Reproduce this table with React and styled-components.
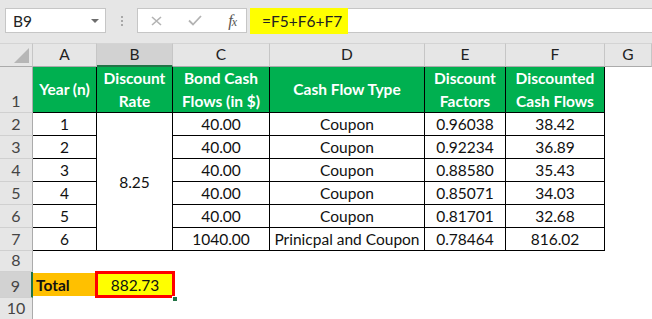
import React from "react";
import styled, { createGlobalStyle } from "styled-components";

const GlobalStyle = createGlobalStyle`
  html, body { margin: 0; padding: 0; background: #fff; }
  body { font-family: Lato, "Open Sans", sans-serif; }
  * { box-sizing: border-box; }
`;

const Page = styled.div`
  width: 652px;
  height: 319px;
  overflow: hidden;
  background: #fff;
  display: flex;
  flex-direction: column;
`;

const FormulaBar = styled.div`
  height: 43px;
  flex: none;
  background: #e6e6e6;
  display: flex;
  align-items: flex-start;
  padding: 8px 0 0 5px;
`;

const NameBox = styled.div`
  width: 101px;
  height: 25px;
  background: #fff;
  border: 1px solid #c6c6c6;
  display: flex;
  align-items: center;
  padding: 0 6px 0 7px;
  font-size: 15.5px;
  color: #222;
`;

const DropArrow = styled.span`
  margin-left: auto;
  width: 0;
  height: 0;
  border-left: 4px solid transparent;
  border-right: 4px solid transparent;
  border-top: 4px solid #6d6d6d;
`;

const Grip = styled.div`
  width: 31px;
  height: 25px;
  display: flex;
  flex-direction: column;
  align-items: center;
  justify-content: center;
  gap: 2px;
  span {
    width: 2px;
    height: 2px;
    background: #a8a8a8;
  }
`;

const FxBox = styled.div`
  width: 110px;
  height: 25px;
  background: #fff;
  border: 1px solid #c6c6c6;
  display: flex;
  align-items: center;
  justify-content: space-between;
  padding: 0 10px 0 13px;
  margin-right: 3px;
`;

const FxLabel = styled.span`
  font-family: "Liberation Serif", serif;
  font-style: italic;
  color: #555;
  font-size: 16px;
  letter-spacing: -1px;
  small { font-size: 12px; }
`;

const FormulaInput = styled.div`
  flex: 1;
  height: 25px;
  background: #fff;
  border-top: 1px solid #c6c6c6;
  border-bottom: 1px solid #c6c6c6;
  display: flex;
`;

const FormulaText = styled.span`
  background: #ffff00;
  height: 26px;
  margin-top: -1px;
  display: flex;
  align-items: center;
  padding: 0 6px 0 12px;
  font-size: 15.5px;
  color: #222;
`;

const Sheet = styled.div`
  flex: 1;
  display: grid;
  grid-template-columns: 33px 64px 76px 97px 155px 81px 99px 1fr;
  grid-template-rows: 24px 46px repeat(6, 23px) 21px 26px 1fr;
`;

const Corner = styled.div`
  background: #e6e6e6;
  border-top: 1px solid #d4d4d4;
  border-right: 1px solid #c6c6c6;
  border-bottom: 1px solid #ababab;
  position: relative;
  &::after {
    content: "";
    position: absolute;
    right: 3px;
    bottom: 3px;
    width: 0;
    height: 0;
    border-left: 15px solid transparent;
    border-bottom: 15px solid #b6b6b6;
  }
`;

const ColHeader = styled.div`
  background: ${(p) => (p.$selected ? "#d2d2d2" : "#e6e6e6")};
  border-top: 1px solid #d4d4d4;
  border-right: 1px solid #c6c6c6;
  border-bottom: ${(p) => (p.$selected ? "2px solid #217346" : "1px solid #ababab")};
  display: flex;
  align-items: center;
  justify-content: center;
  padding-bottom: 2px;
  font-size: 15.5px;
  color: #222;
`;

const RowHeader = styled.div`
  background: ${(p) => (p.$selected ? "#d2d2d2" : "#e6e6e6")};
  border-right: ${(p) => (p.$selected ? "2px solid #217346" : "1px solid #ababab")};
  border-bottom: 1px solid #d0d0d0;
  display: flex;
  align-items: flex-end;
  justify-content: center;
  padding-bottom: 1px;
  font-size: 16px;
  line-height: 20px;
  color: #444;
`;

const HeadCell = styled.div`
  background: #00b050;
  color: #fff;
  font-weight: 700;
  font-size: 15.5px;
  line-height: 23px;
  text-align: center;
  display: flex;
  align-items: center;
  justify-content: center;
  white-space: nowrap;
  border-right: 1px solid #000;
  border-bottom: 1px solid #000;
`;

const Cell = styled.div`
  grid-row: ${(p) => (p.$rowSpan ? `span ${p.$rowSpan}` : "auto")};
  display: flex;
  align-items: ${(p) => (p.$middle ? "center" : "flex-end")};
  justify-content: center;
  padding-bottom: ${(p) => (p.$middle ? "0" : "1px")};
  font-size: 15.5px;
  line-height: 20px;
  color: #111;
  white-space: nowrap;
  border-right: 1px solid #000;
  border-bottom: 1px solid #000;
  background: #fff;
`;

const Blank = styled.div`
  grid-column: ${(p) => p.$cols || "auto"};
  background: #fff;
`;

const TotalLabel = styled.div`
  background: #ffc000;
  font-weight: 700;
  font-size: 15.5px;
  color: #111;
  display: flex;
  align-items: center;
  padding: 1px 0 0 3px;
  margin: 1px 0 2px;
`;

const TotalValue = styled.div`
  position: relative;
  background: #ffff00;
  display: flex;
  align-items: center;
  justify-content: center;
  padding-top: 1px;
  font-size: 15.5px;
  color: #111;
  margin: 1px 0 2px;
  outline: 3px solid #ff0000;
  outline-offset: -1px;
  z-index: 1;
`;

const FillHandle = styled.span`
  position: absolute;
  right: -5px;
  bottom: -6px;
  width: 6px;
  height: 6px;
  background: #217346;
  border: 1px solid #fff;
`;

const rows = [
  ["1", "40.00", "Coupon", "0.96038", "38.42"],
  ["2", "40.00", "Coupon", "0.92234", "36.89"],
  ["3", "40.00", "Coupon", "0.88580", "35.43"],
  ["4", "40.00", "Coupon", "0.85071", "34.03"],
  ["5", "40.00", "Coupon", "0.81701", "32.68"],
  ["6", "1040.00", "Prinicpal and Coupon", "0.78464", "816.02"],
];

const columns = ["A", "B", "C", "D", "E", "F", "G"];

export default function App() {
  return (
    <>
      <GlobalStyle />
      <Page>
        <FormulaBar>
          <NameBox>
            B9
            <DropArrow />
          </NameBox>
          <Grip>
            <span />
            <span />
            <span />
          </Grip>
          <FxBox>
            <svg width="11" height="10" viewBox="0 0 11 10">
              <path d="M1 1 L10 9 M10 1 L1 9" stroke="#b3b3b3" strokeWidth="1.6" fill="none" />
            </svg>
            <svg width="14" height="11" viewBox="0 0 14 11">
              <path d="M1 5.5 L5 9.5 L13 1" stroke="#b3b3b3" strokeWidth="1.8" fill="none" />
            </svg>
            <FxLabel>
              f<small>x</small>
            </FxLabel>
          </FxBox>
          <FormulaInput>
            <FormulaText>=F5+F6+F7</FormulaText>
          </FormulaInput>
        </FormulaBar>

        <Sheet>
          <Corner />
          {columns.map((c) => (
            <ColHeader key={c} $selected={c === "B"}>
              {c}
            </ColHeader>
          ))}

          <RowHeader>1</RowHeader>
          <HeadCell>Year (n)</HeadCell>
          <HeadCell>
            Discount
            <br />
            Rate
          </HeadCell>
          <HeadCell>
            Bond Cash
            <br />
            Flows (in $)
          </HeadCell>
          <HeadCell>Cash Flow Type</HeadCell>
          <HeadCell>
            Discount
            <br />
            Factors
          </HeadCell>
          <HeadCell>
            Discounted
            <br />
            Cash Flows
          </HeadCell>
          <Blank />

          {rows.map((r, i) => (
            <React.Fragment key={i}>
              <RowHeader>{i + 2}</RowHeader>
              <Cell>{r[0]}</Cell>
              {i === 0 && (
                <Cell $rowSpan={6} $middle>
                  8.25
                </Cell>
              )}
              <Cell>{r[1]}</Cell>
              <Cell>{r[2]}</Cell>
              <Cell>{r[3]}</Cell>
              <Cell>{r[4]}</Cell>
              <Blank />
            </React.Fragment>
          ))}

          <RowHeader>8</RowHeader>
          <Blank $cols="2 / -1" />

          <RowHeader $selected>9</RowHeader>
          <TotalLabel>Total</TotalLabel>
          <TotalValue>
            882.73
            <FillHandle />
          </TotalValue>
          <Blank $cols="4 / -1" />

          <RowHeader>10</RowHeader>
          <Blank $cols="2 / -1" />
        </Sheet>
      </Page>
    </>
  );
}
